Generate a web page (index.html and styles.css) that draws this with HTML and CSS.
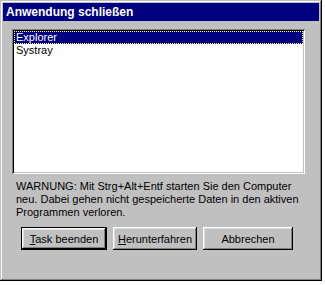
FILE: index.html
```html
<!DOCTYPE html>
<html lang="de">
<head>
    <meta charset="UTF-8">
    <meta name="viewport" content="width=device-width, initial-scale=1.0">
    <link rel="stylesheet" href="styles.css">
    <title>Anwendung schließen</title>
</head>
<body>
<div class="window">
    <div class="titlebar">Anwendung schließen</div>

    <div class="content">
        <ul class="listbox">
            <li class="item selected"><span class="focus">Explorer</span></li>
            <li class="item">Systray</li>
        </ul>

        <p class="warning">
            WARNUNG: Mit Strg+Alt+Entf starten Sie den Computer<br>
            neu. Dabei gehen nicht gespeicherte Daten in den aktiven<br>
            Programmen verloren.
        </p>

        <div class="buttons">
            <button class="btn btn-default btn-task" type="button"><u>T</u>ask beenden</button>
            <button class="btn btn-shutdown" type="button"><u>H</u>erunterfahren</button>
            <button class="btn btn-cancel" type="button">Abbrechen</button>
        </div>
    </div>
</div>
</body>
</html>
```

FILE: styles.css
```css
/* Global */
* {
    box-sizing: border-box;
    margin: 0;
    padding: 0;
}

body {
    background: #fff;
    font-family: "Liberation Sans", Arial, sans-serif;
    font-size: 11px;
    color: #000;
}

/* Window frame */
.window {
    width: 322px;
    height: 281px;
    padding: 3px;
    background: #c0c0c0;
    box-shadow: inset -1px -1px #000, inset 1px 1px #c0c0c0,
                inset -2px -2px #808080, inset 2px 2px #fff;
}

.titlebar {
    height: 18px;
    padding-left: 3px;
    display: flex;
    align-items: center;
    background: #000080;
    color: #fff;
    font-weight: 700;
    font-size: 12px;
}

.content {
    padding: 8px 0 0 9px;
}

/* List */
.listbox {
    list-style: none;
    width: 293px;
    height: 145px;
    padding: 2px;
    background: #fff;
    box-shadow: inset 1px 1px #808080, inset -1px -1px #fff,
                inset 2px 2px #000, inset -2px -2px #c0c0c0;
}

.item {
    height: 13px;
    line-height: 13px;
    padding-left: 2px;
}

.selected {
    padding-left: 0;
}

.selected .focus {
    display: block;
    height: 13px;
    padding-left: 2px;
    background: #000080;
    color: #fff;
    outline: 1px dotted #ffff80;
    outline-offset: -1px;
}

/* Text */
.warning {
    margin: 6px 0 0 4px;
    line-height: 13px;
}

/* Buttons */
.buttons {
    display: flex;
    gap: 6px;
    margin: 8px 0 0 9px;
}

.btn {
    height: 23px;
    border: 0;
    background: #c0c0c0;
    font-family: inherit;
    font-size: 11px;
    color: #000;
    box-shadow: inset -1px -1px #000, inset 1px 1px #fff,
                inset -2px -2px #808080, inset 2px 2px #dfdfdf;
}

.btn-default {
    border: 1px solid #000;
}

.btn-task {
    width: 86px;
}

.btn-shutdown {
    width: 84px;
}

.btn-cancel {
    width: 90px;
}
```
